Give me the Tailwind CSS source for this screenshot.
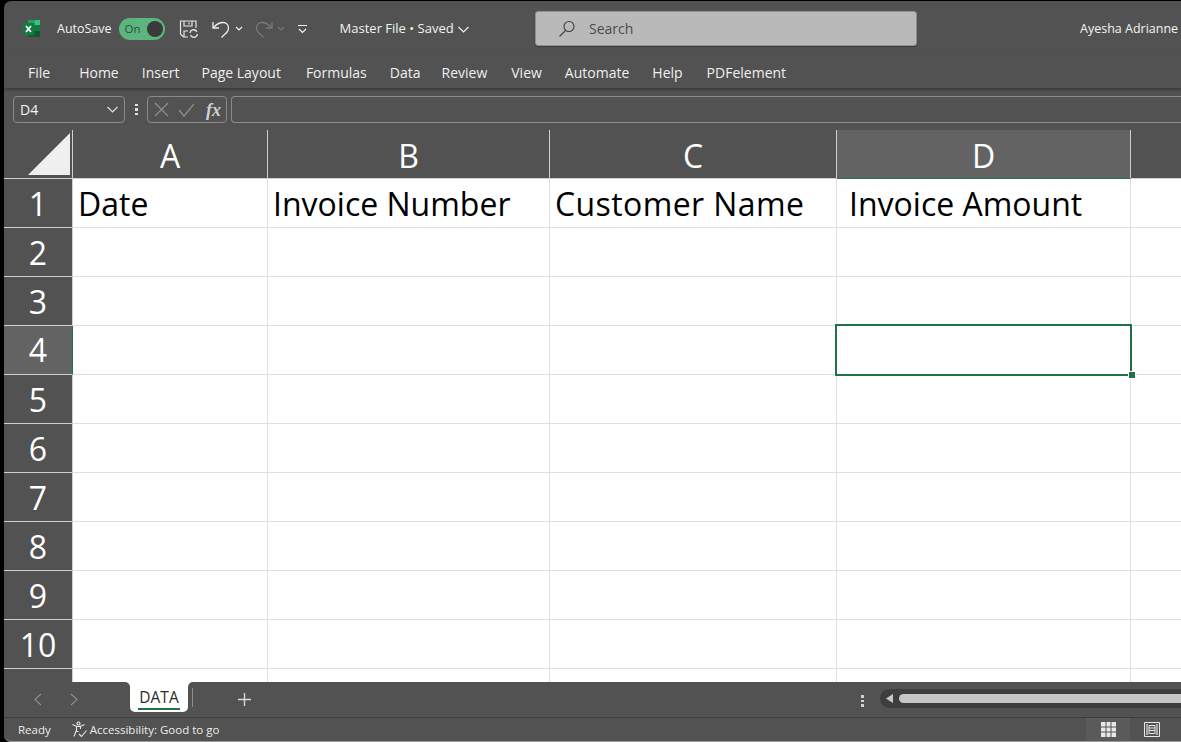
<!DOCTYPE html>
<html lang="en">
<head>
    <meta charset="UTF-8">
    <title>Master File - Excel</title>
    <script src="https://cdn.jsdelivr.net/npm/@tailwindcss/browser@4"></script>
</head>
<body class="bg-black h-[742px] w-[1181px] overflow-hidden font-['Open_Sans','Noto_Sans',sans-serif]">
    <div class="ml-[4px] mt-[1px] h-[741px] w-[1177px] bg-[#525252] rounded-l-[7px] overflow-hidden flex flex-col text-[#f3f3f3] border-b border-[#9a9a9a]">

        <!-- title bar -->
        <header class="h-[49px] shrink-0 flex items-center relative text-[12px] pt-[7px]">
            <svg class="ml-[18px] w-[20px] h-[20px]" viewBox="0 0 20 20">
                <path fill="#21a366" d="M6 1h8v5H6z"/><path fill="#33c481" d="M13 1h4.500a.5.5 0 0 1 .5.500V6h-5z"/>
                <path fill="#107c41" d="M6 6h12v6H6z"/><path fill="#185c37" d="M6 12h7v6H6.500a.5.5 0 0 1-.5-.5z"/><path fill="#0f5a32" d="M13 12h5v5.500a.5.5 0 0 1-.5.5H13z"/>
                <rect x="1" y="4" width="11" height="12" rx="1" fill="#107c41"/>
                <path stroke="#fff" stroke-width="1.700" fill="none" d="M4 7l5 6M9 7l-5 6"/>
            </svg>
            <span class="ml-[15px] text-[12.500px]">AutoSave</span>
            <div class="ml-[7px] w-[46px] h-[22px] rounded-full bg-[#5cb57e] flex items-center justify-between pl-[6px] pr-[2px]">
                <span class="text-[#2f4f3b] text-[11.500px]">On</span>
                <span class="w-[16px] h-[16px] rounded-full bg-[#3a3a3a]"></span>
            </div>
            <svg class="ml-[14px] w-[20px] h-[20px]" viewBox="0 0 20 20" fill="none" stroke="#e6e6e6" stroke-width="1.200">
                <path d="M9 18H4.500L1.500 15V2h15.500v7"/><path d="M5 2v5h8V2M10 3.500v2"/><path d="M5 18v-6h4"/>
                <path stroke-width="1.400" d="M11 14a3.500 3.500 0 0 1 6-2.200l1 1M18.500 15a3.500 3.500 0 0 1-6 2.200l-1-1"/>
            </svg>
            <svg class="ml-[13px] w-[19px] h-[20px]" viewBox="0 0 19 20" fill="none" stroke="#f0f0f0" stroke-width="1.300">
                <path d="M1 3v6h6"/><path d="M1.500 8.500C5 4.500 8 3.500 11 3.500c3.500 0 5.500 2.500 5.500 5.500 0 3-2 5-4 6.500L9.500 18.500"/>
            </svg>
            <svg class="ml-[4px] w-[8px] h-[6px]" viewBox="0 0 8 6" fill="none" stroke="#f0f0f0" stroke-width="1.200"><path d="M1 1l3 3 3-3"/></svg>
            <svg class="ml-[11px] w-[19px] h-[20px]" viewBox="0 0 19 20" fill="none" stroke="#787878" stroke-width="1.300">
                <path d="M18 3v6h-6"/><path d="M17.500 8.500C14 4.500 11 3.500 8 3.500c-3.500 0-5.500 2.500-5.500 5.500 0 3 2 5 4 6.500l3 3"/>
            </svg>
            <svg class="ml-[4px] w-[8px] h-[6px]" viewBox="0 0 8 6" fill="none" stroke="#787878" stroke-width="1.200"><path d="M1 1l3 3 3-3"/></svg>
            <svg class="ml-[13px] w-[9px] h-[10px]" viewBox="0 0 9 10" fill="none" stroke="#f0f0f0" stroke-width="1.200"><path d="M0 1.500h9M1 5l3.500 3.500L8 5"/></svg>
            <span class="ml-[33px] text-[13px]">Master File • Saved</span>
            <svg class="ml-[4px] w-[11px] h-[7px]" viewBox="0 0 11 7" fill="none" stroke="#f0f0f0" stroke-width="1.100"><path d="M.5 1l5 5 5-5"/></svg>
            <div class="absolute left-[531px] top-[10px] w-[382px] h-[35px] rounded-[3px] bg-[#b9b9b9] border border-[#8f8f8f] shadow-[0_1px_1px_#3a3a3a] flex items-center text-[#4c4c4c] text-[14px]">
                <svg class="ml-[22px] w-[18px] h-[18px]" viewBox="0 0 18 18" fill="none" stroke="#404040" stroke-width="1.100"><circle cx="11" cy="6.500" r="5"/><path d="M7.500 10.500L1.500 16.500"/></svg>
                <span class="ml-[13px]">Search</span>
            </div>
            <span class="absolute left-[1076px] top-[19px] text-[12.500px] whitespace-nowrap">Ayesha Adrianne</span>
        </header>

        <!-- ribbon tabs -->
        <nav class="h-[38px] shrink-0 flex items-center text-[14px] text-[#efefef] shadow-[0_2px_2px_#3c3c3c] relative pl-[24px] pt-[6px]">
            <span>File</span>
            <span class="ml-[29px]">Home</span>
            <span class="ml-[23px]">Insert</span>
            <span class="ml-[22px]">Page Layout</span>
            <span class="ml-[25px]">Formulas</span>
            <span class="ml-[23px]">Data</span>
            <span class="ml-[21px]">Review</span>
            <span class="ml-[24px]">View</span>
            <span class="ml-[23px]">Automate</span>
            <span class="ml-[23px]">Help</span>
            <span class="ml-[24px]">PDFelement</span>
        </nav>

        <!-- formula bar -->
        <div class="h-[42px] shrink-0 flex items-start pt-[8px] pl-[9px]">
            <div class="w-[112px] h-[27px] rounded-[4px] border border-[#8a8a8a] flex items-center justify-between pl-[6px] pr-[6px] text-[14px]">
                <span>D4</span>
                <svg class="w-[11px] h-[7px]" viewBox="0 0 11 7" fill="none" stroke="#e0e0e0" stroke-width="1.200"><path d="M.5 1l5 5 5-5"/></svg>
            </div>
            <div class="w-[22px] h-[27px] flex flex-col items-center justify-center gap-[2px]">
                <span class="w-[3px] h-[2.500px] bg-[#e0e0e0]"></span><span class="w-[3px] h-[2.500px] bg-[#e0e0e0]"></span><span class="w-[3px] h-[2.500px] bg-[#e0e0e0]"></span>
            </div>
            <div class="w-[80px] h-[27px] rounded-[4px] border border-[#8a8a8a] flex items-center pl-[6px]">
                <svg class="w-[15px] h-[15px]" viewBox="0 0 15 15" fill="none" stroke="#8f8f8f" stroke-width="1.200"><path d="M1 1l13 13M14 1L1 14"/></svg>
                <svg class="ml-[9px] w-[17px] h-[14px]" viewBox="0 0 17 14" fill="none" stroke="#8f8f8f" stroke-width="1.200"><path d="M1 7l5 6L16 1"/></svg>
                <span class="ml-[11px] font-['Liberation_Serif',serif] italic font-bold text-[18px] leading-none text-[#d0d0d0]">fx</span>
            </div>
            <div class="ml-[4px] flex-1 h-[27px] rounded-l-[4px] border border-r-0 border-[#8a8a8a]"></div>
        </div>

        <!-- sheet grid -->
        <main class="h-[552px] shrink-0 relative overflow-hidden bg-white grid grid-cols-[69px_195px_282px_287px_294px_1fr] auto-rows-[49px] text-[32px] leading-none text-black content-start">
            <!-- column headers -->
            <div class="bg-[#525252] border-b border-r border-[#cfcfcf] relative">
                <svg class="absolute right-[2px] bottom-[3px] w-[42px] h-[42px]" viewBox="0 0 42 42"><path fill="#efefef" d="M42 0v42H0z"/></svg>
            </div>
            <div class="bg-[#525252] text-white border-b border-r border-[#cfcfcf] flex items-center justify-center pt-[3px]">A</div>
            <div class="bg-[#525252] text-white border-b border-r border-[#cfcfcf] flex items-center justify-center pt-[3px]">B</div>
            <div class="bg-[#525252] text-white border-b border-r border-[#cfcfcf] flex items-center justify-center pt-[3px]">C</div>
            <div class="bg-[#636363] text-white border-b border-b-[#217346] border-r border-r-[#cfcfcf] flex items-center justify-center pt-[3px]">D</div>
            <div class="bg-[#525252] border-b border-[#cfcfcf]"></div>

            <!-- row 1 -->
            <div class="bg-[#525252] text-white border-b border-r border-[#cfcfcf] flex items-center justify-center pt-[2px]">1</div>
            <div class="border-b border-r border-[#e0e0e0] flex items-center pl-[5px] pt-[2px] whitespace-nowrap">Date</div>
            <div class="border-b border-r border-[#e0e0e0] flex items-center pl-[5px] pt-[2px] whitespace-nowrap">Invoice Number</div>
            <div class="border-b border-r border-[#e0e0e0] flex items-center pl-[5px] pt-[2px] whitespace-nowrap tracking-[0.4px]">Customer Name</div>
            <div class="border-b border-r border-[#e0e0e0] flex items-center pl-[12px] pt-[2px] whitespace-nowrap">Invoice Amount</div>
            <div class="border-b border-[#e0e0e0]"></div>

            <!-- row 2 -->
            <div class="bg-[#525252] text-white border-b border-r border-[#cfcfcf] flex items-center justify-center pt-[2px]">2</div>
            <div class="border-b border-r border-[#e0e0e0]"></div><div class="border-b border-r border-[#e0e0e0]"></div><div class="border-b border-r border-[#e0e0e0]"></div><div class="border-b border-r border-[#e0e0e0]"></div><div class="border-b border-[#e0e0e0]"></div>
            <!-- row 3 -->
            <div class="bg-[#525252] text-white border-b border-r border-[#cfcfcf] flex items-center justify-center pt-[2px]">3</div>
            <div class="border-b border-r border-[#e0e0e0]"></div><div class="border-b border-r border-[#e0e0e0]"></div><div class="border-b border-r border-[#e0e0e0]"></div><div class="border-b border-r border-[#e0e0e0]"></div><div class="border-b border-[#e0e0e0]"></div>
            <!-- row 4, selected -->
            <div class="bg-[#636363] text-white border-b border-b-[#cfcfcf] border-r border-r-[#217346] flex items-center justify-center">4</div>
            <div class="border-b border-r border-[#e0e0e0]"></div><div class="border-b border-r border-[#e0e0e0]"></div><div class="border-b border-r border-[#e0e0e0]"></div>
            <div class="border-b border-r border-[#e0e0e0] relative">
                <div class="absolute left-[-2px] top-[-2px] w-[297px] h-[52px] border-2 border-[#217346]"></div>
                <div class="absolute left-[291px] top-[45px] w-[6px] h-[6px] bg-[#217346] border border-white box-content"></div>
            </div>
            <div class="border-b border-[#e0e0e0]"></div>
            <!-- row 5 -->
            <div class="bg-[#525252] text-white border-b border-r border-[#cfcfcf] flex items-center justify-center pt-[2px]">5</div>
            <div class="border-b border-r border-[#e0e0e0]"></div><div class="border-b border-r border-[#e0e0e0]"></div><div class="border-b border-r border-[#e0e0e0]"></div><div class="border-b border-r border-[#e0e0e0]"></div><div class="border-b border-[#e0e0e0]"></div>
            <!-- row 6 -->
            <div class="bg-[#525252] text-white border-b border-r border-[#cfcfcf] flex items-center justify-center pt-[2px]">6</div>
            <div class="border-b border-r border-[#e0e0e0]"></div><div class="border-b border-r border-[#e0e0e0]"></div><div class="border-b border-r border-[#e0e0e0]"></div><div class="border-b border-r border-[#e0e0e0]"></div><div class="border-b border-[#e0e0e0]"></div>
            <!-- row 7 -->
            <div class="bg-[#525252] text-white border-b border-r border-[#cfcfcf] flex items-center justify-center pt-[2px]">7</div>
            <div class="border-b border-r border-[#e0e0e0]"></div><div class="border-b border-r border-[#e0e0e0]"></div><div class="border-b border-r border-[#e0e0e0]"></div><div class="border-b border-r border-[#e0e0e0]"></div><div class="border-b border-[#e0e0e0]"></div>
            <!-- row 8 -->
            <div class="bg-[#525252] text-white border-b border-r border-[#cfcfcf] flex items-center justify-center pt-[2px]">8</div>
            <div class="border-b border-r border-[#e0e0e0]"></div><div class="border-b border-r border-[#e0e0e0]"></div><div class="border-b border-r border-[#e0e0e0]"></div><div class="border-b border-r border-[#e0e0e0]"></div><div class="border-b border-[#e0e0e0]"></div>
            <!-- row 9 -->
            <div class="bg-[#525252] text-white border-b border-r border-[#cfcfcf] flex items-center justify-center pt-[2px]">9</div>
            <div class="border-b border-r border-[#e0e0e0]"></div><div class="border-b border-r border-[#e0e0e0]"></div><div class="border-b border-r border-[#e0e0e0]"></div><div class="border-b border-r border-[#e0e0e0]"></div><div class="border-b border-[#e0e0e0]"></div>
            <!-- row 10 -->
            <div class="bg-[#525252] text-white border-b border-r border-[#cfcfcf] flex items-center justify-center pt-[2px]">10</div>
            <div class="border-b border-r border-[#e0e0e0]"></div><div class="border-b border-r border-[#e0e0e0]"></div><div class="border-b border-r border-[#e0e0e0]"></div><div class="border-b border-r border-[#e0e0e0]"></div><div class="border-b border-[#e0e0e0]"></div>
            <!-- row 11, cut off -->
            <div class="bg-[#525252] border-r border-[#cfcfcf]"></div>
            <div class="border-r border-[#e0e0e0]"></div><div class="border-r border-[#e0e0e0]"></div><div class="border-r border-[#e0e0e0]"></div><div class="border-r border-[#e0e0e0]"></div><div></div>
        </main>

        <!-- sheet tabs -->
        <div class="h-[36px] shrink-0 flex items-stretch bg-white border-b border-[#3e3e3e]">
            <div class="w-[126px] bg-[#525252] rounded-tr-[5px] flex items-start">
                <svg class="ml-[30px] mt-[11px] w-[8px] h-[13px]" viewBox="0 0 8 13" fill="none" stroke="#8f8f8f" stroke-width="1.100"><path d="M7 1L1 6.500 7 12"/></svg>
                <svg class="ml-[28px] mt-[11px] w-[8px] h-[13px]" viewBox="0 0 8 13" fill="none" stroke="#8f8f8f" stroke-width="1.100"><path d="M1 1l6 5.500L1 12"/></svg>
            </div>
            <div class="w-[58px] bg-[#525252]">
                <div class="h-[30px] bg-white rounded-b-[5px] flex flex-col items-center text-[#2b2b2b] text-[15.500px] font-medium">
                    <span class="mt-[5px] leading-[20px]">DATA</span>
                    <span class="mt-[1px] w-[42px] h-[2px] bg-[#217346]"></span>
                </div>
            </div>
            <div class="flex-1 bg-[#525252] rounded-tl-[5px] flex items-start">
                <span class="ml-[4px] mt-[6px] w-px h-[19px] bg-[#8f8f8f]"></span>
                <svg class="ml-[45px] mt-[11px] w-[13px] h-[13px]" viewBox="0 0 13 13" stroke="#d8d8d8" stroke-width="1.400"><path d="M6.500 0v13M0 6.500h13"/></svg>
                <div class="ml-[610px] mt-[13px] flex flex-col gap-[2px] w-[4px]">
                    <span class="w-[3px] h-[2.500px] bg-[#d0d0d0]"></span><span class="w-[3px] h-[2.500px] bg-[#d0d0d0]"></span><span class="w-[3px] h-[2.500px] bg-[#d0d0d0]"></span>
                </div>
                <div class="ml-[15px] mt-[7px] flex-1 h-[19px] bg-[#3e3e3e] rounded-l-full flex items-center pl-[6px]">
                    <svg class="w-[7px] h-[9px]" viewBox="0 0 7 9"><path fill="#c8c8c8" d="M7 0v9L0 4.500z"/></svg>
                    <span class="ml-[6px] flex-1 h-[9px] bg-[#c6c6c6] rounded-l-full"></span>
                </div>
            </div>
        </div>

        <!-- status bar -->
        <footer class="h-[23px] shrink-0 flex items-center text-[11.500px] text-[#ececec]">
            <span class="ml-[14px]">Ready</span>
            <svg class="ml-[20px] w-[17px] h-[17px]" viewBox="0 0 17 17" fill="none" stroke="#e8e8e8" stroke-width="1.100">
                <circle cx="7.500" cy="2.500" r="1.500"/><path d="M1.500 3.500C4 5 5 5.500 7.500 5.500S11 5 13.500 3.500M5.500 5.500V9L3 15.500M9.500 5.500V8M5.500 10.500h2"/><path d="M8 13l2.500 2.500L15.500 9.500"/>
            </svg>
            <span class="ml-[2px]">Accessibility: Good to go</span>
            <div class="ml-auto mr-[7px] flex h-full">
                <div class="w-[44px] h-full bg-[#5a5a5a] flex items-center justify-center">
                    <svg class="w-[15px] h-[15px]" viewBox="0 0 15 15"><path fill="#e8e8e8" d="M0 0h15v15H0z"/><path stroke="#525252" d="M5 0v15M10 0v15M0 5h15M0 10h15"/></svg>
                </div>
                <div class="w-[44px] h-full flex items-center justify-center">
                    <svg class="w-[16px] h-[15px]" viewBox="0 0 16 15" fill="none" stroke="#e8e8e8"><path d="M.5.500h15v14H.5z"/><path stroke="#a8a8a8" stroke-width="2" d="M3 2v11M13 2v11"/><path d="M5 3.500h6v8H5zM5 6h6M5 8.500h6"/></svg>
                </div>
            </div>
        </footer>
    </div>
</body>
</html>
